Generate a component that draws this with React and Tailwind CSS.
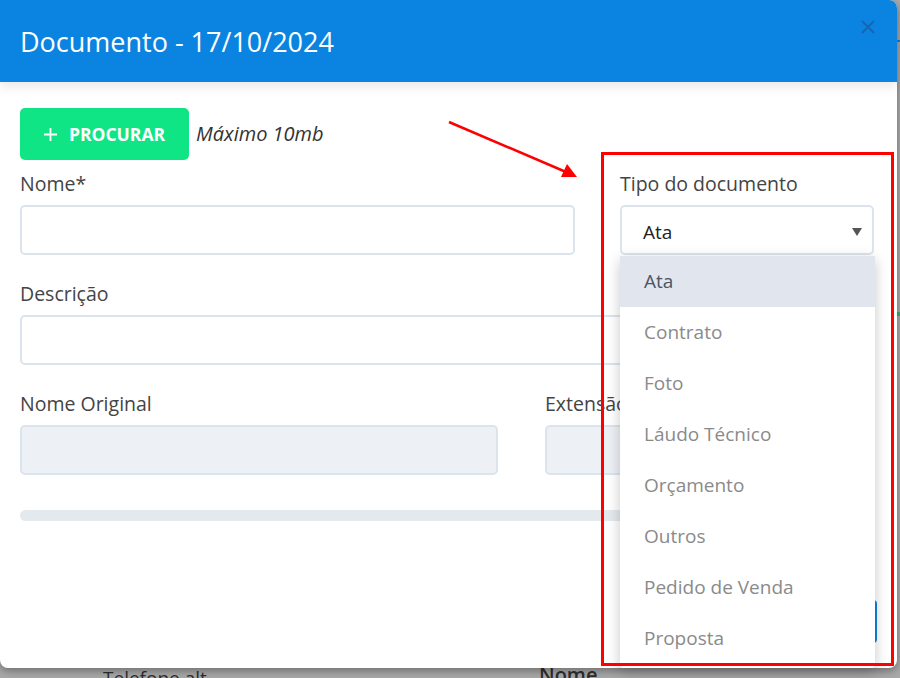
import React from 'react';

const TIPOS = ['Ata', 'Contrato', 'Foto', 'Láudo Técnico', 'Orçamento', 'Outros', 'Pedido de Venda', 'Proposta'];

function Label({ children, className = '' }) {
  return <div className={`text-[19.5px] leading-6 text-[#444] ${className}`}>{children}</div>;
}

function Input({ readOnly }) {
  return (
    <div
      className={`h-[50px] mt-[9px] rounded-[5px] border-2 ${
        readOnly ? 'bg-[#edf0f5] border-[#dbe4ec]' : 'bg-white border-[#dbe4ec]'
      }`}
    />
  );
}

function TipoSelect() {
  return (
    <div className="relative">
      <Label className="mt-[12px]">Tipo do documento</Label>
      <div className="h-[50px] mt-[9px] rounded-[5px] border-2 border-[#dbe4ec] bg-white flex items-center justify-between pl-[21px] pr-[10px] pt-[4px]">
        <span className="text-[19px] text-[#222]">Ata</span>
        <svg width="10" height="8" viewBox="0 0 10 8">
          <path d="M0 0 H10 L5 8 Z" fill="#555" />
        </svg>
      </div>

      {/* open options list */}
      <div className="absolute left-0 top-[96px] w-[255px] z-20 bg-white rounded-b-[4px] shadow-[0_4px_14px_rgba(0,0,0,0.22)] pb-1">
        {TIPOS.map((t, i) => (
          <div
            key={t}
            className={`h-[51px] flex items-center pl-[24px] text-[19px] ${
              i === 0 ? 'bg-[#e1e6ee] text-[#4b5566]' : 'text-[#8a8a8a]'
            }`}
          >
            {t}
          </div>
        ))}
      </div>
    </div>
  );
}

export default function App() {
  return (
    <div className="relative w-[900px] h-[678px] overflow-hidden bg-[#a9a9a9] font-['Open_Sans',sans-serif]">
      {/* page behind the backdrop */}
      <div className="absolute left-[103px] top-[664px] text-[19px] text-[#2e2e2e]">Telefone alt</div>
      <div className="absolute left-[539px] top-[660px] text-[20px] font-semibold text-[#2e2e2e]">Nome</div>
      <div className="absolute left-[897px] top-[312px] w-[3px] h-[4px] bg-[#2bb673]" />
      <div className="absolute left-[897px] top-[40px] w-[3px] h-[2px] bg-[#0a84e0]" />

      {/* modal */}
      <div className="absolute left-0 top-0 w-[897px] h-[668px] bg-white rounded-b-[8px] rounded-tr-[8px] shadow-[0_3px_8px_rgba(0,0,0,0.35)] flex flex-col">
        <div className="h-[82px] bg-[#0a84e0] rounded-tr-[8px] flex items-center justify-between pl-5 pr-[22px] shadow-[0_6px_10px_rgba(0,0,0,0.08)] relative z-10">
          <h1 className="text-[27px] text-white leading-none">Documento - 17/10/2024</h1>
          <svg width="14" height="14" viewBox="0 0 14 14" className="mb-[28px]">
            <path d="M1 1 L13 13 M13 1 L1 13" stroke="#1565b4" strokeWidth="2" />
          </svg>
        </div>

        <div className="pt-[26px] pl-5 pr-[22px] flex-1 flex flex-col">
          <div className="flex items-center gap-[7px]">
            <button className="h-[52px] w-[169px] rounded-[5px] bg-[#10e585] text-white flex items-center justify-center gap-[12px] font-bold text-[17.5px]">
              <svg width="13" height="13" viewBox="0 0 13 13">
                <path d="M6.5 0 V13 M0 6.5 H13" stroke="#fff" strokeWidth="1.8" />
              </svg>
              PROCURAR
            </button>
            <span className="italic text-[20px] text-[#333]">Máximo 10mb</span>
          </div>

          <div className="grid grid-cols-[555px_254px] gap-x-[45px]">
            <div>
              <Label className="mt-[12px]">Nome*</Label>
              <Input />
            </div>
            <TipoSelect />
          </div>

          <Label className="mt-[27px]">Descrição</Label>
          <Input />

          <div className="grid grid-cols-[478px_1fr] gap-x-[47px]">
            <div>
              <Label className="mt-[27px]">Nome Original</Label>
              <Input readOnly />
            </div>
            <div>
              <Label className="mt-[27px]">Extensão</Label>
              <Input readOnly />
            </div>
          </div>

          <div className="mt-[35px] h-[11px] rounded-full bg-[#e4e9ee]" />

          <div className="flex justify-end mt-[79px] -mr-[2px]">
            <button className="h-[43px] w-[140px] rounded-[4px] bg-[#0a84e0] text-white text-[16px]">Salvar</button>
          </div>
        </div>
      </div>

      {/* annotation */}
      <div className="absolute left-[601px] top-[152px] w-[293px] h-[514px] border-[3px] border-[#ff0000] z-30 pointer-events-none" />
      <svg className="absolute left-0 top-0 z-30 pointer-events-none" width="900" height="678">
        <line x1="449" y1="122" x2="566" y2="172" stroke="#ff0000" strokeWidth="2.5" />
        <path d="M577 177 L561 177 L567 164 Z" fill="#ff0000" />
      </svg>
    </div>
  );
}
